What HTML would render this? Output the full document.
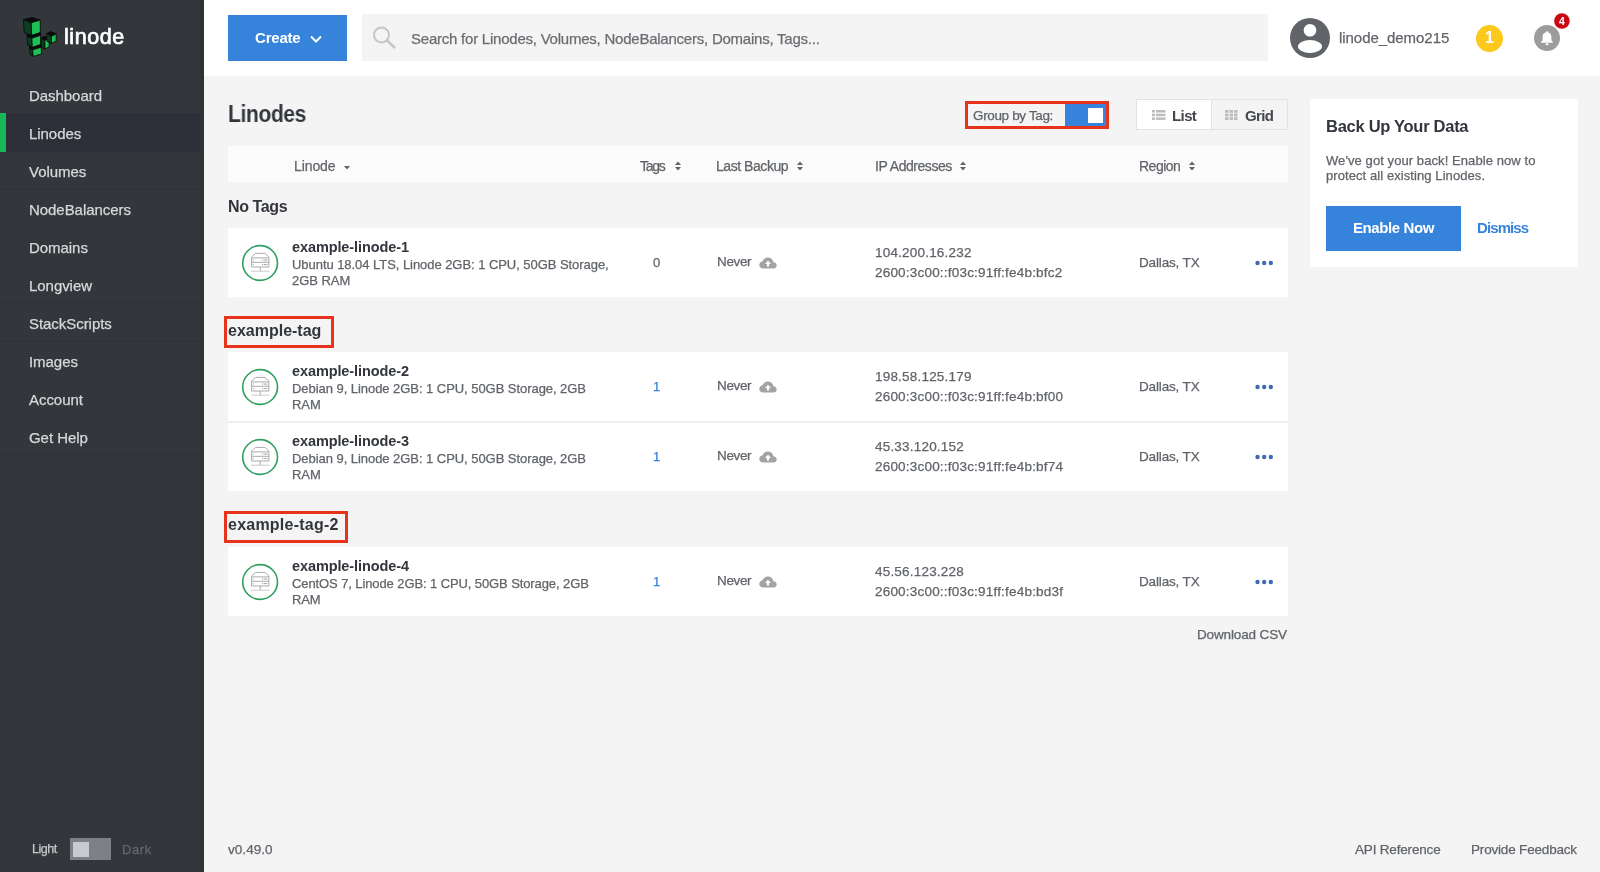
<!DOCTYPE html>
<html><head><meta charset="utf-8"><style>
html,body{margin:0;padding:0;width:1600px;height:872px;overflow:hidden;background:#f4f4f4;}
body{position:relative;font-family:"Liberation Sans",sans-serif;}
.t{position:absolute;line-height:1;white-space:nowrap;will-change:transform;}
.n{-webkit-text-stroke:0.25px currentColor;}
.b{position:absolute;box-sizing:border-box;}
svg{position:absolute;}
</style></head><body>
<div class="b" style="left:0px;top:0px;width:204px;height:872px;background:#33373b;"></div>
<svg style="left:18px;top:14px" width="44" height="44" viewBox="0 0 44 44">
<g stroke="#0a0c0b" stroke-width="0.9" stroke-linejoin="round">
<polygon points="5.5,5.5 14,3.5 22.3,6 13.2,8.8" fill="#0a0c0b"/>
<polygon points="5.5,5.5 13.2,8.8 13.6,21.5 6.2,18.5" fill="#0c3f1f"/>
<polygon points="13.2,8.8 22.3,6 22.3,18.6 13.6,21.5" fill="#1fbf58"/>
<polygon points="9,20.5 13.6,21.5 22.5,18.6 22.6,21.4 13.8,24.2 9,22.5" fill="#0a0c0b"/>
<polygon points="9,22.5 13.8,24.2 14.3,33.5 9.6,31" fill="#0c3f1f"/>
<polygon points="13.8,24.2 22.6,21.4 22.7,30.6 14.3,33.5" fill="#1fbf58"/>
<polygon points="11.5,32 14.3,33.5 23,30.6 23.2,33.2 14.6,35.8 11.6,34" fill="#0a0c0b"/>
<polygon points="11.6,34 14.6,35.8 15.2,42.4 12.2,40.6" fill="#0c3f1f"/>
<polygon points="14.6,35.8 23.2,33.2 23.5,40 15.2,42.4" fill="#1fbf58"/>
<polygon points="23,24 27,22.3 31.2,24.2 26.8,26.6" fill="#0a0c0b"/>
<polygon points="23,24 26.8,26.6 27,35.2 23.4,32.8" fill="#0c3f1f"/>
<polygon points="26.8,26.6 31.2,24.2 31.2,32.6 27,35.2" fill="#1fbf58"/>
<polygon points="28.6,19.6 32.5,17.6 38.2,19.8 33.4,22.4" fill="#0a0c0b"/>
<polygon points="28.6,19.6 33.4,22.4 33.4,29.6 29,27.2" fill="#0c3f1f"/>
<polygon points="33.4,22.4 38.2,19.8 38.2,27 33.4,29.6" fill="#1fbf58"/>
</g></svg>
<div class="t n" style="left:64px;top:26.80px;font-size:21.5px;font-weight:normal;color:#ffffff;letter-spacing:0.55px;-webkit-text-stroke:0.7px #fff;">linode</div>
<div class="t n" style="left:29px;top:88.30px;font-size:15px;font-weight:normal;color:#d7d8da;letter-spacing:-0.05px;">Dashboard</div>
<div class="b" style="left:0px;top:113px;width:204px;height:39px;background:#2d3038;"></div>
<div class="b" style="left:0px;top:113px;width:6px;height:39px;background:#17b85a;"></div>
<div class="t n" style="left:29px;top:126.30px;font-size:15px;font-weight:normal;color:#d7d8da;letter-spacing:-0.05px;">Linodes</div>
<div class="b" style="left:0px;top:189px;width:204px;height:1px;background:#2f3237;"></div>
<div class="t n" style="left:29px;top:164.30px;font-size:15px;font-weight:normal;color:#d7d8da;letter-spacing:-0.05px;">Volumes</div>
<div class="b" style="left:0px;top:227px;width:204px;height:1px;background:#2f3237;"></div>
<div class="t n" style="left:29px;top:202.30px;font-size:15px;font-weight:normal;color:#d7d8da;letter-spacing:-0.05px;">NodeBalancers</div>
<div class="b" style="left:0px;top:265px;width:204px;height:1px;background:#2f3237;"></div>
<div class="t n" style="left:29px;top:240.30px;font-size:15px;font-weight:normal;color:#d7d8da;letter-spacing:-0.05px;">Domains</div>
<div class="b" style="left:0px;top:303px;width:204px;height:1px;background:#2f3237;"></div>
<div class="t n" style="left:29px;top:278.30px;font-size:15px;font-weight:normal;color:#d7d8da;letter-spacing:-0.05px;">Longview</div>
<div class="b" style="left:0px;top:341px;width:204px;height:1px;background:#2f3237;"></div>
<div class="t n" style="left:29px;top:316.30px;font-size:15px;font-weight:normal;color:#d7d8da;letter-spacing:-0.05px;">StackScripts</div>
<div class="b" style="left:0px;top:379px;width:204px;height:1px;background:#2f3237;"></div>
<div class="t n" style="left:29px;top:354.30px;font-size:15px;font-weight:normal;color:#d7d8da;letter-spacing:-0.05px;">Images</div>
<div class="b" style="left:0px;top:417px;width:204px;height:1px;background:#2f3237;"></div>
<div class="t n" style="left:29px;top:392.30px;font-size:15px;font-weight:normal;color:#d7d8da;letter-spacing:-0.05px;">Account</div>
<div class="b" style="left:0px;top:455px;width:204px;height:1px;background:#2f3237;"></div>
<div class="t n" style="left:29px;top:430.30px;font-size:15px;font-weight:normal;color:#d7d8da;letter-spacing:-0.05px;">Get Help</div>
<div class="b" style="left:200px;top:0px;width:4px;height:872px;background:#2f3236;"></div>
<div class="t n" style="left:32px;top:843.42px;font-size:12.5px;font-weight:normal;color:#c9cacb;letter-spacing:-0.45px;">Light</div>
<div class="b" style="left:70px;top:838px;width:41px;height:22px;background:#7d8086;"></div>
<div class="b" style="left:73px;top:841.5px;width:16px;height:15px;background:#c9cacd;"></div>
<div class="t n" style="left:122px;top:842.99px;font-size:13px;font-weight:normal;color:#64676c;letter-spacing:0.6px;">Dark</div>
<div class="b" style="left:204px;top:0px;width:1396px;height:76px;background:#ffffff;"></div>
<div class="b" style="left:228px;top:15px;width:119px;height:46px;background:#3683dc;"></div>
<div class="t" style="left:255px;top:30.30px;font-size:15px;font-weight:bold;color:#ffffff;letter-spacing:-0.2px;">Create</div>
<svg style="left:309px;top:34px" width="14" height="10" viewBox="0 0 14 10"><polyline points="2,2.5 7,7.5 12,2.5" fill="none" stroke="#fff" stroke-width="2"/></svg>
<div class="b" style="left:362px;top:14px;width:906px;height:47px;background:#f4f4f4;"></div>
<svg style="left:370px;top:24px" width="30" height="28" viewBox="0 0 30 28"><circle cx="11.5" cy="11" r="7.5" fill="none" stroke="#c5c6c8" stroke-width="2"/><line x1="17" y1="16.5" x2="24.5" y2="23.5" stroke="#c5c6c8" stroke-width="2.4" stroke-linecap="round"/></svg>
<div class="t n" style="left:411px;top:30.80px;font-size:15px;font-weight:normal;color:#6a6d72;letter-spacing:-0.23px;">Search for Linodes, Volumes, NodeBalancers, Domains, Tags...</div>
<svg style="left:1290px;top:18px" width="40" height="40" viewBox="0 0 40 40"><circle cx="20" cy="20" r="20" fill="#606469"/><circle cx="20" cy="12.2" r="6.3" fill="#fff"/><ellipse cx="20" cy="28.5" rx="12" ry="6.5" fill="#fff"/></svg>
<div class="t n" style="left:1338.5px;top:30.30px;font-size:15px;font-weight:normal;color:#606469;letter-spacing:-0.05px;">linode_demo215</div>
<svg style="left:1476px;top:24.5px" width="27" height="27" viewBox="0 0 27 27"><circle cx="13.5" cy="13.5" r="13.5" fill="#fdc91c"/></svg>
<div class="t" style="left:1485.2px;top:29.85px;font-size:16px;font-weight:bold;color:#ffffff;letter-spacing:0px;">1</div>
<svg style="left:1534px;top:25px" width="26" height="26" viewBox="0 0 26 26"><circle cx="13" cy="13" r="13" fill="#9c9c9c"/><path d="M13 6.3 c0.7 0 1.1 0.5 1.1 1 c2.3 0.6 3.3 2.5 3.3 5 v3.2 l1.6 1.6 v0.6 h-12 v-0.6 l1.6 -1.6 v-3.2 c0 -2.5 1 -4.4 3.3 -5 c0 -0.5 0.4 -1 1.1 -1z" fill="#fff"/><ellipse cx="13" cy="19.3" rx="1.6" ry="1" fill="#fff"/></svg>
<svg style="left:1554px;top:13px" width="16" height="16" viewBox="0 0 16 16"><circle cx="7.9" cy="8" r="7.8" fill="#ca0813"/></svg>
<div class="t" style="left:1558.8px;top:16.21px;font-size:10.5px;font-weight:bold;color:#ffffff;letter-spacing:0px;">4</div>
<div class="t" style="left:228px;top:103.13px;font-size:23px;font-weight:bold;color:#32363c;letter-spacing:-0.35px;transform:scaleX(0.91);transform-origin:0 0;">Linodes</div>
<div class="b" style="left:965px;top:100.5px;width:144px;height:28px;background:transparent;border:3px solid #e5331c;"></div>
<div class="t n" style="left:973px;top:108.57px;font-size:13.5px;font-weight:normal;color:#606469;letter-spacing:-0.35px;">Group by Tag:</div>
<div class="b" style="left:1065px;top:104px;width:41px;height:22px;background:#3683dc;"></div>
<div class="b" style="left:1087.5px;top:107.5px;width:15.5px;height:15.5px;background:#ffffff;"></div>
<div class="b" style="left:1136px;top:99px;width:152px;height:31px;background:#f4f4f4;border:1px solid #e3e3e3;"></div>
<div class="b" style="left:1137px;top:100px;width:74px;height:29px;background:#ffffff;"></div>
<div class="b" style="left:1211px;top:100px;width:1px;height:29px;background:#e3e3e3;"></div>
<svg style="left:1152px;top:110px" width="14" height="11" viewBox="0 0 14 11"><g fill="#bcbcbc"><rect x="0" y="0" width="3" height="2.5"/><rect x="4" y="0" width="9.5" height="2.5"/><rect x="0" y="3.7" width="3" height="2.5"/><rect x="4" y="3.7" width="9.5" height="2.5"/><rect x="0" y="7.4" width="3" height="2.5"/><rect x="4" y="7.4" width="9.5" height="2.5"/></g></svg>
<div class="t" style="left:1172px;top:107.80px;font-size:15px;font-weight:bold;color:#44474c;letter-spacing:-0.6px;">List</div>
<svg style="left:1224.5px;top:110px" width="13" height="11" viewBox="0 0 13 11"><g fill="#bcbcbc"><rect x="0" y="0" width="3.5" height="2.8"/><rect x="4.5" y="0" width="3.5" height="2.8"/><rect x="9" y="0" width="3.5" height="2.8"/><rect x="0" y="3.6" width="3.5" height="2.8"/><rect x="4.5" y="3.6" width="3.5" height="2.8"/><rect x="9" y="3.6" width="3.5" height="2.8"/><rect x="0" y="7.2" width="3.5" height="2.8"/><rect x="4.5" y="7.2" width="3.5" height="2.8"/><rect x="9" y="7.2" width="3.5" height="2.8"/></g></svg>
<div class="t" style="left:1245px;top:107.80px;font-size:15px;font-weight:bold;color:#44474c;letter-spacing:-0.6px;">Grid</div>
<div class="b" style="left:228px;top:146px;width:1060px;height:36px;background:#fbfbfb;"></div>
<div class="t n" style="left:294px;top:158.65px;font-size:14px;font-weight:normal;color:#606469;letter-spacing:-0.1px;">Linode</div>
<svg style="left:343.5px;top:166px" width="6" height="4" viewBox="0 0 6 4"><polygon points="0,0 6,0 3,3.5" fill="#606469"/></svg>
<div class="t n" style="left:640px;top:158.65px;font-size:14px;font-weight:normal;color:#606469;letter-spacing:-1.3px;">Tags</div>
<svg style="left:674.5px;top:160.5px" width="6" height="10" viewBox="0 0 6 10"><polygon points="0,4 3,0.5 6,4" fill="#606469"/><polygon points="0,6 3,9.5 6,6" fill="#606469"/></svg>
<div class="t n" style="left:716px;top:158.65px;font-size:14px;font-weight:normal;color:#606469;letter-spacing:-0.45px;">Last Backup</div>
<svg style="left:797px;top:160.5px" width="6" height="10" viewBox="0 0 6 10"><polygon points="0,4 3,0.5 6,4" fill="#606469"/><polygon points="0,6 3,9.5 6,6" fill="#606469"/></svg>
<div class="t n" style="left:874.5px;top:158.65px;font-size:14px;font-weight:normal;color:#606469;letter-spacing:-0.45px;">IP Addresses</div>
<svg style="left:959.5px;top:160.5px" width="6" height="10" viewBox="0 0 6 10"><polygon points="0,4 3,0.5 6,4" fill="#606469"/><polygon points="0,6 3,9.5 6,6" fill="#606469"/></svg>
<div class="t n" style="left:1139.4px;top:158.65px;font-size:14px;font-weight:normal;color:#606469;letter-spacing:-0.5px;">Region</div>
<svg style="left:1188.5px;top:160.5px" width="6" height="10" viewBox="0 0 6 10"><polygon points="0,4 3,0.5 6,4" fill="#606469"/><polygon points="0,6 3,9.5 6,6" fill="#606469"/></svg>
<div class="t" style="left:228px;top:198.65px;font-size:16px;font-weight:bold;color:#32363c;letter-spacing:-0.4px;">No Tags</div>
<div class="b" style="left:228px;top:228px;width:1060px;height:69px;background:#ffffff;"></div>
<svg style="left:241px;top:243.65px" width="38" height="38" viewBox="0 0 38 38"><circle cx="19.1" cy="19" r="17.4" fill="#fff" stroke="#2e9f5e" stroke-width="1.6"/><g fill="none" stroke="#a0a0a0" stroke-width="0.9"><path d="M10.6 13 L14.6 9.4 H23.9 L27.9 13 V23 H10.6 Z"/><line x1="11.2" y1="13.9" x2="27.3" y2="13.9"/><line x1="10.6" y1="18.3" x2="27.9" y2="18.3"/><line x1="19.2" y1="23" x2="19.2" y2="27.2"/></g><line x1="10" y1="27.2" x2="28.5" y2="27.2" stroke="#c4c4c4" stroke-width="0.9"/><g fill="#9a9a9a"><rect x="11.8" y="15.6" width="1" height="0.9"/><rect x="21" y="15.6" width="1.2" height="0.9"/><rect x="22.8" y="15.6" width="3.6" height="0.9"/><rect x="11.8" y="20.2" width="1" height="0.9"/><rect x="21" y="20.2" width="1.2" height="0.9"/><rect x="22.8" y="20.2" width="3.6" height="0.9"/></g></svg>
<div class="t" style="left:292px;top:239.52px;font-size:14.5px;font-weight:bold;color:#32363c;letter-spacing:-0.1px;">example-linode-1</div>
<div class="t n" style="left:291.5px;top:258.39px;font-size:13px;font-weight:normal;color:#606469;letter-spacing:-0.05px;">Ubuntu 18.04 LTS, Linode 2GB: 1 CPU, 50GB Storage,</div>
<div class="t n" style="left:291.5px;top:273.59px;font-size:13px;font-weight:normal;color:#606469;letter-spacing:-0.05px;">2GB RAM</div>
<div class="t n" style="left:653px;top:255.99px;font-size:13px;font-weight:normal;color:#606469;letter-spacing:0px;">0</div>
<div class="t n" style="left:716.5px;top:255.07px;font-size:13.5px;font-weight:normal;color:#606469;letter-spacing:-0.35px;">Never</div>
<svg style="left:758.5px;top:256.5px" width="18" height="12" viewBox="0 0 18 12"><path d="M4.2 11.5 C1.9 11.5 0.3 10 0.3 8 C0.3 6.2 1.6 4.8 3.4 4.6 C4 2.2 6.2 0.5 8.8 0.5 C11.7 0.5 14 2.5 14.4 5.2 C16.3 5.4 17.7 6.8 17.7 8.5 C17.7 10.2 16.3 11.5 14.5 11.5 Z" fill="#a3a3a3"/><path d="M9 3.8 L12 7 H10.1 V9.6 H7.9 V7 H6 Z" fill="#fff"/></svg>
<div class="t n" style="left:875px;top:246.27px;font-size:13.5px;font-weight:normal;color:#606469;letter-spacing:0.2px;">104.200.16.232</div>
<div class="t n" style="left:875px;top:266.17px;font-size:13.5px;font-weight:normal;color:#606469;letter-spacing:0.2px;">2600:3c00::f03c:91ff:fe4b:bfc2</div>
<div class="t n" style="left:1139.4px;top:256.07px;font-size:13.5px;font-weight:normal;color:#606469;letter-spacing:-0.15px;">Dallas, TX</div>
<svg style="left:1254.5px;top:259.5px" width="19" height="6" viewBox="0 0 19 6"><circle cx="2.5" cy="3" r="2.2" fill="#3f69b0"/><circle cx="9.2" cy="3" r="2.2" fill="#3f69b0"/><circle cx="15.8" cy="3" r="2.2" fill="#3f69b0"/></svg>
<div class="b" style="left:224px;top:315.5px;width:110px;height:32px;background:transparent;border:3px solid #e5331c;"></div>
<div class="t" style="left:228px;top:322.95px;font-size:16px;font-weight:bold;color:#32363c;letter-spacing:0px;">example-tag</div>
<div class="b" style="left:228px;top:352px;width:1060px;height:69px;background:#ffffff;"></div>
<svg style="left:241px;top:367.65px" width="38" height="38" viewBox="0 0 38 38"><circle cx="19.1" cy="19" r="17.4" fill="#fff" stroke="#2e9f5e" stroke-width="1.6"/><g fill="none" stroke="#a0a0a0" stroke-width="0.9"><path d="M10.6 13 L14.6 9.4 H23.9 L27.9 13 V23 H10.6 Z"/><line x1="11.2" y1="13.9" x2="27.3" y2="13.9"/><line x1="10.6" y1="18.3" x2="27.9" y2="18.3"/><line x1="19.2" y1="23" x2="19.2" y2="27.2"/></g><line x1="10" y1="27.2" x2="28.5" y2="27.2" stroke="#c4c4c4" stroke-width="0.9"/><g fill="#9a9a9a"><rect x="11.8" y="15.6" width="1" height="0.9"/><rect x="21" y="15.6" width="1.2" height="0.9"/><rect x="22.8" y="15.6" width="3.6" height="0.9"/><rect x="11.8" y="20.2" width="1" height="0.9"/><rect x="21" y="20.2" width="1.2" height="0.9"/><rect x="22.8" y="20.2" width="3.6" height="0.9"/></g></svg>
<div class="t" style="left:292px;top:363.52px;font-size:14.5px;font-weight:bold;color:#32363c;letter-spacing:-0.1px;">example-linode-2</div>
<div class="t n" style="left:291.5px;top:382.39px;font-size:13px;font-weight:normal;color:#606469;letter-spacing:-0.05px;">Debian 9, Linode 2GB: 1 CPU, 50GB Storage, 2GB</div>
<div class="t n" style="left:291.5px;top:397.59px;font-size:13px;font-weight:normal;color:#606469;letter-spacing:-0.05px;">RAM</div>
<div class="t n" style="left:652.5px;top:379.99px;font-size:13px;font-weight:normal;color:#3683dc;letter-spacing:0px;">1</div>
<div class="t n" style="left:716.5px;top:379.07px;font-size:13.5px;font-weight:normal;color:#606469;letter-spacing:-0.35px;">Never</div>
<svg style="left:758.5px;top:380.5px" width="18" height="12" viewBox="0 0 18 12"><path d="M4.2 11.5 C1.9 11.5 0.3 10 0.3 8 C0.3 6.2 1.6 4.8 3.4 4.6 C4 2.2 6.2 0.5 8.8 0.5 C11.7 0.5 14 2.5 14.4 5.2 C16.3 5.4 17.7 6.8 17.7 8.5 C17.7 10.2 16.3 11.5 14.5 11.5 Z" fill="#a3a3a3"/><path d="M9 3.8 L12 7 H10.1 V9.6 H7.9 V7 H6 Z" fill="#fff"/></svg>
<div class="t n" style="left:875px;top:370.27px;font-size:13.5px;font-weight:normal;color:#606469;letter-spacing:0.2px;">198.58.125.179</div>
<div class="t n" style="left:875px;top:390.17px;font-size:13.5px;font-weight:normal;color:#606469;letter-spacing:0.2px;">2600:3c00::f03c:91ff:fe4b:bf00</div>
<div class="t n" style="left:1139.4px;top:380.07px;font-size:13.5px;font-weight:normal;color:#606469;letter-spacing:-0.15px;">Dallas, TX</div>
<svg style="left:1254.5px;top:383.5px" width="19" height="6" viewBox="0 0 19 6"><circle cx="2.5" cy="3" r="2.2" fill="#3f69b0"/><circle cx="9.2" cy="3" r="2.2" fill="#3f69b0"/><circle cx="15.8" cy="3" r="2.2" fill="#3f69b0"/></svg>
<div class="b" style="left:228px;top:422px;width:1060px;height:69px;background:#ffffff;"></div>
<svg style="left:241px;top:437.65px" width="38" height="38" viewBox="0 0 38 38"><circle cx="19.1" cy="19" r="17.4" fill="#fff" stroke="#2e9f5e" stroke-width="1.6"/><g fill="none" stroke="#a0a0a0" stroke-width="0.9"><path d="M10.6 13 L14.6 9.4 H23.9 L27.9 13 V23 H10.6 Z"/><line x1="11.2" y1="13.9" x2="27.3" y2="13.9"/><line x1="10.6" y1="18.3" x2="27.9" y2="18.3"/><line x1="19.2" y1="23" x2="19.2" y2="27.2"/></g><line x1="10" y1="27.2" x2="28.5" y2="27.2" stroke="#c4c4c4" stroke-width="0.9"/><g fill="#9a9a9a"><rect x="11.8" y="15.6" width="1" height="0.9"/><rect x="21" y="15.6" width="1.2" height="0.9"/><rect x="22.8" y="15.6" width="3.6" height="0.9"/><rect x="11.8" y="20.2" width="1" height="0.9"/><rect x="21" y="20.2" width="1.2" height="0.9"/><rect x="22.8" y="20.2" width="3.6" height="0.9"/></g></svg>
<div class="t" style="left:292px;top:433.52px;font-size:14.5px;font-weight:bold;color:#32363c;letter-spacing:-0.1px;">example-linode-3</div>
<div class="t n" style="left:291.5px;top:452.39px;font-size:13px;font-weight:normal;color:#606469;letter-spacing:-0.05px;">Debian 9, Linode 2GB: 1 CPU, 50GB Storage, 2GB</div>
<div class="t n" style="left:291.5px;top:467.59px;font-size:13px;font-weight:normal;color:#606469;letter-spacing:-0.05px;">RAM</div>
<div class="t n" style="left:652.5px;top:449.99px;font-size:13px;font-weight:normal;color:#3683dc;letter-spacing:0px;">1</div>
<div class="t n" style="left:716.5px;top:449.07px;font-size:13.5px;font-weight:normal;color:#606469;letter-spacing:-0.35px;">Never</div>
<svg style="left:758.5px;top:450.5px" width="18" height="12" viewBox="0 0 18 12"><path d="M4.2 11.5 C1.9 11.5 0.3 10 0.3 8 C0.3 6.2 1.6 4.8 3.4 4.6 C4 2.2 6.2 0.5 8.8 0.5 C11.7 0.5 14 2.5 14.4 5.2 C16.3 5.4 17.7 6.8 17.7 8.5 C17.7 10.2 16.3 11.5 14.5 11.5 Z" fill="#a3a3a3"/><path d="M9 3.8 L12 7 H10.1 V9.6 H7.9 V7 H6 Z" fill="#fff"/></svg>
<div class="t n" style="left:875px;top:440.27px;font-size:13.5px;font-weight:normal;color:#606469;letter-spacing:0.2px;">45.33.120.152</div>
<div class="t n" style="left:875px;top:460.17px;font-size:13.5px;font-weight:normal;color:#606469;letter-spacing:0.2px;">2600:3c00::f03c:91ff:fe4b:bf74</div>
<div class="t n" style="left:1139.4px;top:450.07px;font-size:13.5px;font-weight:normal;color:#606469;letter-spacing:-0.15px;">Dallas, TX</div>
<svg style="left:1254.5px;top:453.5px" width="19" height="6" viewBox="0 0 19 6"><circle cx="2.5" cy="3" r="2.2" fill="#3f69b0"/><circle cx="9.2" cy="3" r="2.2" fill="#3f69b0"/><circle cx="15.8" cy="3" r="2.2" fill="#3f69b0"/></svg>
<div class="b" style="left:228px;top:420.5px;width:1060px;height:2px;background:#eeeeee;"></div>
<div class="b" style="left:224px;top:510.5px;width:124px;height:32px;background:transparent;border:3px solid #e5331c;"></div>
<div class="t" style="left:228px;top:516.85px;font-size:16px;font-weight:bold;color:#32363c;letter-spacing:0.23px;">example-tag-2</div>
<div class="b" style="left:228px;top:547px;width:1060px;height:69px;background:#ffffff;"></div>
<svg style="left:241px;top:562.65px" width="38" height="38" viewBox="0 0 38 38"><circle cx="19.1" cy="19" r="17.4" fill="#fff" stroke="#2e9f5e" stroke-width="1.6"/><g fill="none" stroke="#a0a0a0" stroke-width="0.9"><path d="M10.6 13 L14.6 9.4 H23.9 L27.9 13 V23 H10.6 Z"/><line x1="11.2" y1="13.9" x2="27.3" y2="13.9"/><line x1="10.6" y1="18.3" x2="27.9" y2="18.3"/><line x1="19.2" y1="23" x2="19.2" y2="27.2"/></g><line x1="10" y1="27.2" x2="28.5" y2="27.2" stroke="#c4c4c4" stroke-width="0.9"/><g fill="#9a9a9a"><rect x="11.8" y="15.6" width="1" height="0.9"/><rect x="21" y="15.6" width="1.2" height="0.9"/><rect x="22.8" y="15.6" width="3.6" height="0.9"/><rect x="11.8" y="20.2" width="1" height="0.9"/><rect x="21" y="20.2" width="1.2" height="0.9"/><rect x="22.8" y="20.2" width="3.6" height="0.9"/></g></svg>
<div class="t" style="left:292px;top:558.52px;font-size:14.5px;font-weight:bold;color:#32363c;letter-spacing:-0.1px;">example-linode-4</div>
<div class="t n" style="left:291.5px;top:577.39px;font-size:13px;font-weight:normal;color:#606469;letter-spacing:-0.1px;">CentOS 7, Linode 2GB: 1 CPU, 50GB Storage, 2GB</div>
<div class="t n" style="left:291.5px;top:592.59px;font-size:13px;font-weight:normal;color:#606469;letter-spacing:-0.1px;">RAM</div>
<div class="t n" style="left:652.5px;top:574.99px;font-size:13px;font-weight:normal;color:#3683dc;letter-spacing:0px;">1</div>
<div class="t n" style="left:716.5px;top:574.07px;font-size:13.5px;font-weight:normal;color:#606469;letter-spacing:-0.35px;">Never</div>
<svg style="left:758.5px;top:575.5px" width="18" height="12" viewBox="0 0 18 12"><path d="M4.2 11.5 C1.9 11.5 0.3 10 0.3 8 C0.3 6.2 1.6 4.8 3.4 4.6 C4 2.2 6.2 0.5 8.8 0.5 C11.7 0.5 14 2.5 14.4 5.2 C16.3 5.4 17.7 6.8 17.7 8.5 C17.7 10.2 16.3 11.5 14.5 11.5 Z" fill="#a3a3a3"/><path d="M9 3.8 L12 7 H10.1 V9.6 H7.9 V7 H6 Z" fill="#fff"/></svg>
<div class="t n" style="left:875px;top:565.27px;font-size:13.5px;font-weight:normal;color:#606469;letter-spacing:0.2px;">45.56.123.228</div>
<div class="t n" style="left:875px;top:585.17px;font-size:13.5px;font-weight:normal;color:#606469;letter-spacing:0.2px;">2600:3c00::f03c:91ff:fe4b:bd3f</div>
<div class="t n" style="left:1139.4px;top:575.07px;font-size:13.5px;font-weight:normal;color:#606469;letter-spacing:-0.15px;">Dallas, TX</div>
<svg style="left:1254.5px;top:578.5px" width="19" height="6" viewBox="0 0 19 6"><circle cx="2.5" cy="3" r="2.2" fill="#3f69b0"/><circle cx="9.2" cy="3" r="2.2" fill="#3f69b0"/><circle cx="15.8" cy="3" r="2.2" fill="#3f69b0"/></svg>
<div class="t n" style="right:313.20000000000005px;top:628.17px;font-size:13.5px;font-weight:normal;color:#606469;letter-spacing:-0.13px;">Download CSV</div>
<div class="b" style="left:1310px;top:99px;width:268px;height:168px;background:#ffffff;"></div>
<div class="t" style="left:1326.3px;top:118.43px;font-size:16.5px;font-weight:bold;color:#32363c;letter-spacing:-0.28px;">Back Up Your Data</div>
<div class="t n" style="left:1326px;top:153.99px;font-size:13px;font-weight:normal;color:#606469;letter-spacing:0.08px;">We've got your back! Enable now to</div>
<div class="t n" style="left:1326px;top:168.99px;font-size:13px;font-weight:normal;color:#606469;letter-spacing:0.08px;">protect all existing Linodes.</div>
<div class="b" style="left:1326px;top:206px;width:135px;height:45px;background:#3683dc;"></div>
<div class="t" style="left:1353px;top:220.30px;font-size:15px;font-weight:bold;color:#ffffff;letter-spacing:-0.4px;">Enable Now</div>
<div class="t" style="left:1476.6px;top:220.30px;font-size:15px;font-weight:bold;color:#3683dc;letter-spacing:-0.9px;">Dismiss</div>
<div class="t n" style="left:228px;top:843.07px;font-size:13.5px;font-weight:normal;color:#606469;letter-spacing:0.05px;">v0.49.0</div>
<div class="t n" style="left:1355px;top:842.57px;font-size:13.5px;font-weight:normal;color:#606469;letter-spacing:-0.18px;">API Reference</div>
<div class="t n" style="left:1471.3px;top:842.57px;font-size:13.5px;font-weight:normal;color:#606469;letter-spacing:-0.18px;">Provide Feedback</div>
</body></html>
